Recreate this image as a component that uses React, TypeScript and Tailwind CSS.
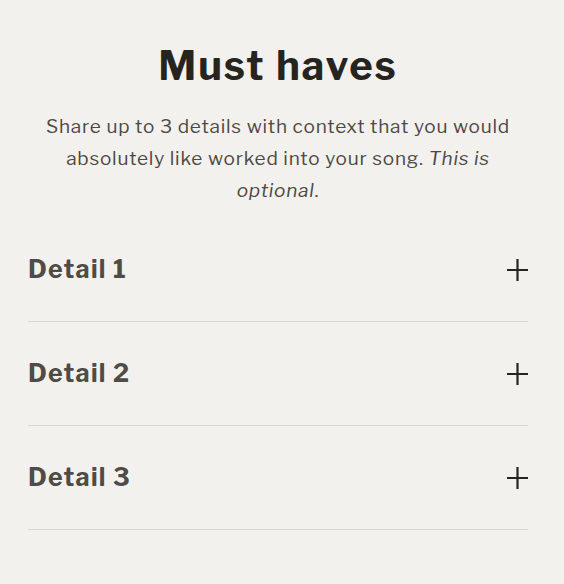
const details = ['Detail 1', 'Detail 2', 'Detail 3'];

function PlusIcon() {
  return (
    <svg width="21" height="22" viewBox="0 0 21 22" className="text-[#26241f]">
      <path d="M10.5 0v22M0 11h21" stroke="currentColor" strokeWidth="2.2" fill="none" />
    </svg>
  );
}

export default function App() {
  return (
    <div
      className="min-h-[584px] w-full bg-[#f3f1ed] pl-7 pr-9 pt-[38px]"
      style={{ fontFamily: '"Libre Franklin", "Noto Sans", sans-serif' }}
    >
      <h1 className="text-center text-[40px] font-bold leading-[56px] tracking-[0.05em] text-[#26241f]">
        Must haves
      </h1>
      <p className="mt-[17px] text-center text-[19px] leading-[32px] tracking-[0.04em] text-[#4d4a45]">
        Share up to 3 details with context that you would absolutely like worked into your song.{' '}
        <em>This is optional</em>.
      </p>

      <div className="mt-[11px]">
        {details.map((label) => (
          <div
            key={label}
            className="flex h-[104px] items-center justify-between border-b border-[#dcd9d3]"
          >
            <span className="text-[25px] font-bold tracking-[0.05em] text-[#4f4c47]">{label}</span>
            <PlusIcon />
          </div>
        ))}
      </div>
    </div>
  );
}
